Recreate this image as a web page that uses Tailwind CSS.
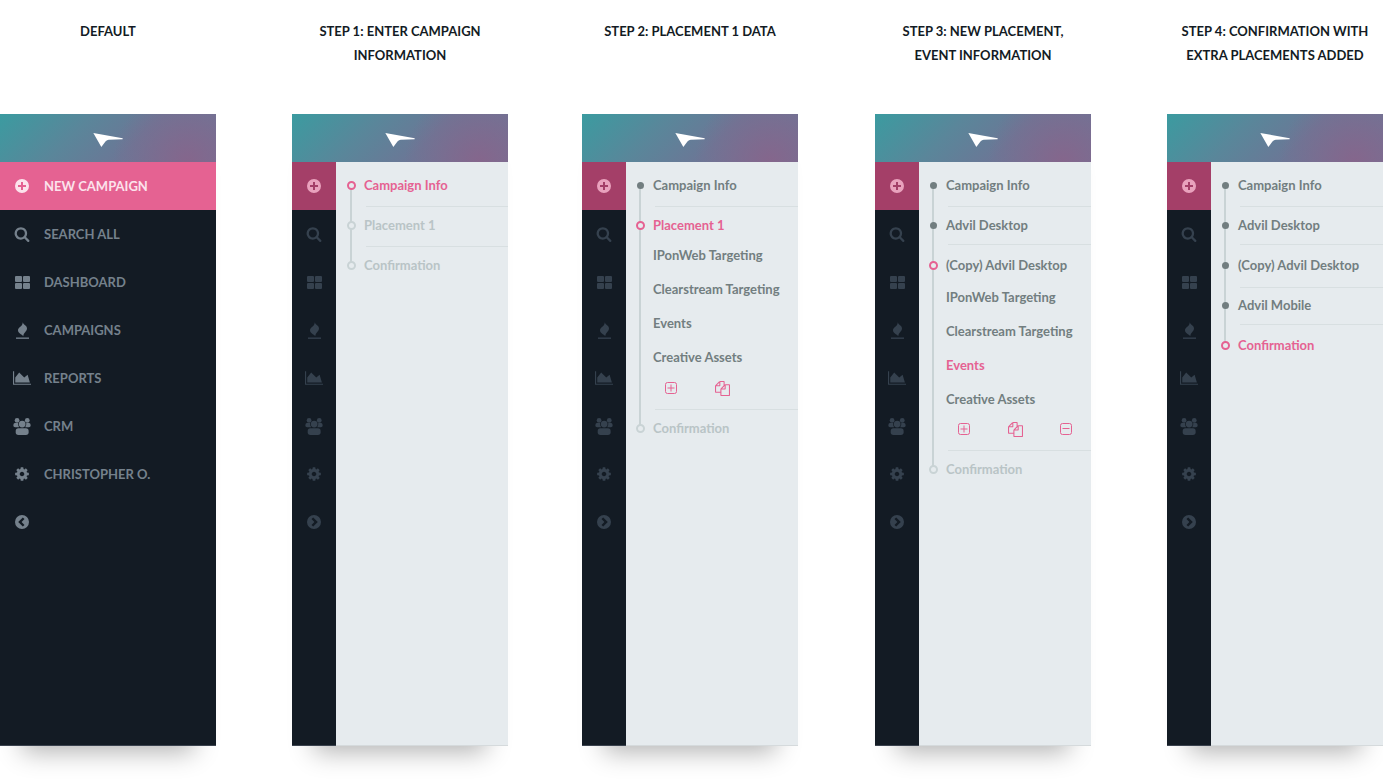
<!DOCTYPE html>
<html lang="en">
<head>
  <meta charset="UTF-8" />
  <meta name="viewport" content="width=device-width, initial-scale=1.0"/>
  <title>Campaign Sidebar</title>
  <script src="https://cdn.jsdelivr.net/npm/@tailwindcss/browser@4"></script>
</head>
<body class="min-h-screen bg-white font-['Lato',sans-serif] text-[13px] leading-5 font-bold">

  <!-- shared icons -->
  <svg class="hidden" aria-hidden="true">
    <symbol id="logo" viewBox="0 0 88 42"><path d="M0 0 L88 16 L88 19 L46 20 Q41 20 37 25 L24 42 Z"/></symbol>
    <symbol id="plus" viewBox="0 0 16 16"><path fill-rule="evenodd" d="M8 1a7 7 0 1 0 0 14a7 7 0 1 0 0-14zM7 4h2v3h3v2h-3v3h-2v-3h-3v-2h3z"/></symbol>
    <symbol id="search" viewBox="0 0 1792 1792"><path d="M1216 832q0-185-131.500-316.500t-316.500-131.500-316.500 131.500-131.500 316.500 131.500 316.500 316.500 131.500 316.500-131.500 131.500-316.500zm512 832q0 52-38 90t-90 38q-54 0-90-38l-343-342q-179 124-399 124-143 0-273.500-55.500t-225-150-150-225-55.500-273.500 55.500-273.500 150-225 225-150 273.500-55.500 273.500 55.500 225 150 150 225 55.500 273.500q0 220-124 399l343 343q37 37 37 90z"/></symbol>
    <symbol id="grid" viewBox="0 0 15 13"><rect width="7" height="6" rx="1"/><rect x="8" width="7" height="6" rx="1"/><rect y="7" width="7" height="6" rx="1"/><rect x="8" y="7" width="7" height="6" rx="1"/></symbol>
    <symbol id="flame" viewBox="0 0 39 50"><path d="M20 0 C23 9 33 9 33 19 C33 28 22 32 22 42 C17 36 5 34 6 23 C7 14 21 12 20 0Z"/><rect y="46" width="39" height="4"/></symbol>
    <symbol id="chart" viewBox="0 0 2048 1792"><path d="M2048 1536v128h-2048v-1536h128v1408h1920zm-384-1024l256 896h-1664v-576l448-576 576 576z"/></symbol>
    <symbol id="users" viewBox="0 0 51 50"><circle cx="11" cy="7" r="7"/><circle cx="41" cy="7" r="7"/><path d="M4 15 H14 Q13 22 17 27 H5 Q0 27 0 22 Q0 16 4 15Z"/><path d="M47 15 H38 Q39 22 35 27 H46 Q51 27 51 22 Q51 16 47 15Z"/><circle cx="26" cy="18" r="10"/><rect x="7" y="30" width="38" height="20" rx="8"/></symbol>
    <symbol id="cog" viewBox="0 0 1792 1792"><path d="M1152 896q0-106-75-181t-181-75-181 75-75 181 75 181 181 75 181-75 75-181zm512-109v222q0 12-8 23t-20 13l-185 28q-19 54-39 91 35 50 107 138 10 12 10 25t-9 23q-27 37-99 108t-94 71q-12 0-26-9l-138-108q-44 23-91 38-16 136-29 186-7 28-36 28h-222q-14 0-24.500-8.500t-11.500-21.500l-28-184q-49-16-90-37l-141 107q-10 9-25 9-14 0-25-11-126-114-165-168-7-10-7-23 0-12 8-23 15-21 51-66.500t54-70.500q-27-50-41-99l-183-27q-13-2-21-12.500t-8-23.500v-222q0-12 8-23t19-13l186-28q14-46 39-92-40-57-107-138-10-12-10-24 0-10 9-23 26-36 98.500-107.500t94.500-71.500q13 0 26 10l138 107q44-23 91-38 16-136 29-186 7-28 36-28h222q14 0 24.500 8.500t11.500 21.500l28 184q49 16 90 37l142-107q9-9 24-9 13 0 25 10 129 119 165 170 7 8 7 22 0 12-8 23-15 21-51 66.500t-54 70.500q26 50 41 98l183 28q13 2 21 12.500t8 23.500z"/></symbol>
    <symbol id="left" viewBox="0 0 16 16"><path fill-rule="evenodd" d="M8 1a7 7 0 1 0 0 14a7 7 0 1 0 0-14zM8.800 3.400l1.700 1.700L7.600 8l2.900 2.900l-1.700 1.700L4.200 8z"/></symbol>
    <symbol id="right" viewBox="0 0 16 16"><path fill-rule="evenodd" d="M8 1a7 7 0 1 0 0 14a7 7 0 1 0 0-14zM7.200 3.400l-1.700 1.700L8.400 8l-2.900 2.900l1.700 1.700L11.800 8z"/></symbol>
    <symbol id="add" viewBox="0 0 16 16"><g fill="none" stroke="currentColor"><rect x="2.500" y="2.500" width="11" height="11" rx="2"/><path d="M4.500 8h7M8 4.500v7"/></g></symbol>
    <symbol id="remove" viewBox="0 0 16 16"><g fill="none" stroke="currentColor"><rect x="2.500" y="2.500" width="11" height="11" rx="2"/><path d="M4.500 7.500h7"/></g></symbol>
    <symbol id="copy" viewBox="0 0 1792 1792"><path d="M1696 384q40 0 68 28t28 68v1216q0 40-28 68t-68 28h-960q-40 0-68-28t-28-68v-288h-544q-40 0-68-28t-28-68v-672q0-40 20-88t48-76l408-408q28-28 76-48t88-20h416q40 0 68 28t28 68v328q68-40 128-40h416zm-544 213l-299 299h299v-299zm-640-384l-299 299h299v-299zm196 647l316-316v-416h-384v416q0 40-28 68t-68 28h-416v640h512v-256q0-40 20-88t48-76zm956 804v-1152h-384v416q0 40-28 68t-68 28h-416v640h896z"/></symbol>
  </svg>

  <main class="grid grid-cols-[292fr_290fr_293fr_292fr_216fr]">

    <!-- default -->
    <section class="w-[216px]">
      <h2 class="h-[114px] pt-[19px] text-center leading-6 text-[#131b24]">DEFAULT</h2>
      <div class="flex min-h-[632px] flex-col border-b border-[#3a424e] bg-[#131b24] shadow-[0_28px_24px_-22px_rgba(0,0,0,0.3)]">
        <header class="flex h-12 items-center justify-center bg-[radial-gradient(circle_at_87%_100%,#85668c,transparent_75px),linear-gradient(135deg,#3b9ba0,#5a869a_35%,#6b7796_62%,#717396)] pt-1 text-white">
          <svg class="h-3.5 w-[30px] fill-current"><use href="#logo"/></svg>
        </header>
        <nav class="text-[#75818c]">
          <a href="#" class="flex h-12 items-center bg-[#e56292] text-[#fce3ec]"><span class="flex w-11 justify-center"><svg class="size-4 fill-current"><use href="#plus"/></svg></span>NEW CAMPAIGN</a>
          <a href="#" class="flex h-12 items-center"><span class="flex w-11 justify-center"><svg class="size-4 fill-current"><use href="#search"/></svg></span>SEARCH ALL</a>
          <a href="#" class="flex h-12 items-center"><span class="flex w-11 justify-center"><svg class="h-[13px] w-[15px] fill-current"><use href="#grid"/></svg></span>DASHBOARD</a>
          <a href="#" class="flex h-12 items-center"><span class="flex w-11 justify-center"><svg class="h-[17px] w-[13px] fill-current"><use href="#flame"/></svg></span>CAMPAIGNS</a>
          <a href="#" class="flex h-12 items-center"><span class="flex w-11 justify-center"><svg class="h-4 w-[18px] fill-current"><use href="#chart"/></svg></span>REPORTS</a>
          <a href="#" class="flex h-12 items-center"><span class="flex w-11 justify-center"><svg class="h-[17px] w-[18px] fill-current"><use href="#users"/></svg></span>CRM</a>
          <a href="#" class="flex h-12 items-center"><span class="flex w-11 justify-center"><svg class="size-4 fill-current"><use href="#cog"/></svg></span>CHRISTOPHER O.</a>
          <button type="button" aria-label="Collapse menu" class="flex h-12 w-11 items-center justify-center"><svg class="size-4 fill-current"><use href="#left"/></svg></button>
        </nav>
      </div>
    </section>

    <!-- step 1 -->
    <section class="w-[216px]">
      <h2 class="h-[114px] pt-[19px] text-center leading-6 text-[#131b24]">STEP 1: ENTER CAMPAIGN<br>INFORMATION</h2>
      <div class="flex min-h-[632px] flex-col shadow-[0_28px_24px_-22px_rgba(0,0,0,0.3)]">
        <header class="flex h-12 items-center justify-center bg-[radial-gradient(circle_at_87%_100%,#85668c,transparent_75px),linear-gradient(135deg,#3b9ba0,#5a869a_35%,#6b7796_62%,#717396)] pt-1 text-white">
          <svg class="h-3.5 w-[30px] fill-current"><use href="#logo"/></svg>
        </header>
        <div class="flex flex-1">
          <nav class="w-11 border-b border-[#3a424e] bg-[#131b24] text-[#35414e]">
            <a href="#" aria-label="New campaign" class="flex h-12 items-center justify-center bg-[#a43f68] text-[#e9a2bd]"><svg class="size-4 fill-current"><use href="#plus"/></svg></a>
            <a href="#" aria-label="Search all" class="flex h-12 items-center justify-center"><svg class="size-4 fill-current"><use href="#search"/></svg></a>
            <a href="#" aria-label="Dashboard" class="flex h-12 items-center justify-center"><svg class="h-[13px] w-[15px] fill-current"><use href="#grid"/></svg></a>
            <a href="#" aria-label="Campaigns" class="flex h-12 items-center justify-center"><svg class="h-[17px] w-[13px] fill-current"><use href="#flame"/></svg></a>
            <a href="#" aria-label="Reports" class="flex h-12 items-center justify-center"><svg class="h-4 w-[18px] fill-current"><use href="#chart"/></svg></a>
            <a href="#" aria-label="CRM" class="flex h-12 items-center justify-center"><svg class="h-[17px] w-[18px] fill-current"><use href="#users"/></svg></a>
            <a href="#" aria-label="Settings" class="flex h-12 items-center justify-center"><svg class="size-4 fill-current"><use href="#cog"/></svg></a>
            <button type="button" aria-label="Expand menu" class="flex h-12 w-11 items-center justify-center"><svg class="size-4 fill-current"><use href="#right"/></svg></button>
          </nav>
          <div class="flex-1 border-b border-[#d5dadc] bg-[#e6ebee]">
            <ol class="relative pt-[13px] pl-7 text-[#b9c4c6] before:absolute before:top-6 before:bottom-2.5 before:left-3.5 before:w-0.5 before:bg-[#c9d3d5]">
              <li class="relative">
                <span class="absolute top-1.5 -left-[17px] size-[9px] rounded-full border-2 border-[#e56292] bg-[#e6ebee]"></span>
                <a href="#" class="block text-[#e56292]">Campaign Info</a>
                <hr class="mt-[11px] ml-0.5 border-[#d8dfe1]">
              </li>
              <li class="relative mt-2">
                <span class="absolute top-1.5 -left-[17px] size-[9px] rounded-full border-2 border-[#c9d3d5] bg-[#e6ebee]"></span>
                <a href="#" class="block">Placement 1</a>
                <hr class="mt-[11px] ml-0.5 border-[#d8dfe1]">
              </li>
              <li class="relative mt-2">
                <span class="absolute top-1.5 -left-[17px] size-[9px] rounded-full border-2 border-[#c9d3d5] bg-[#e6ebee]"></span>
                <a href="#" class="block">Confirmation</a>
              </li>
            </ol>
          </div>
        </div>
      </div>
    </section>

    <!-- step 2 -->
    <section class="w-[216px]">
      <h2 class="h-[114px] pt-[19px] text-center leading-6 text-[#131b24]">STEP 2: PLACEMENT 1 DATA</h2>
      <div class="flex min-h-[632px] flex-col shadow-[0_28px_24px_-22px_rgba(0,0,0,0.3)]">
        <header class="flex h-12 items-center justify-center bg-[radial-gradient(circle_at_87%_100%,#85668c,transparent_75px),linear-gradient(135deg,#3b9ba0,#5a869a_35%,#6b7796_62%,#717396)] pt-1 text-white">
          <svg class="h-3.5 w-[30px] fill-current"><use href="#logo"/></svg>
        </header>
        <div class="flex flex-1">
          <nav class="w-11 border-b border-[#3a424e] bg-[#131b24] text-[#35414e]">
            <a href="#" aria-label="New campaign" class="flex h-12 items-center justify-center bg-[#a43f68] text-[#e9a2bd]"><svg class="size-4 fill-current"><use href="#plus"/></svg></a>
            <a href="#" aria-label="Search all" class="flex h-12 items-center justify-center"><svg class="size-4 fill-current"><use href="#search"/></svg></a>
            <a href="#" aria-label="Dashboard" class="flex h-12 items-center justify-center"><svg class="h-[13px] w-[15px] fill-current"><use href="#grid"/></svg></a>
            <a href="#" aria-label="Campaigns" class="flex h-12 items-center justify-center"><svg class="h-[17px] w-[13px] fill-current"><use href="#flame"/></svg></a>
            <a href="#" aria-label="Reports" class="flex h-12 items-center justify-center"><svg class="h-4 w-[18px] fill-current"><use href="#chart"/></svg></a>
            <a href="#" aria-label="CRM" class="flex h-12 items-center justify-center"><svg class="h-[17px] w-[18px] fill-current"><use href="#users"/></svg></a>
            <a href="#" aria-label="Settings" class="flex h-12 items-center justify-center"><svg class="size-4 fill-current"><use href="#cog"/></svg></a>
            <button type="button" aria-label="Expand menu" class="flex h-12 w-11 items-center justify-center"><svg class="size-4 fill-current"><use href="#right"/></svg></button>
          </nav>
          <div class="flex-1 border-b border-[#d5dadc] bg-[#e6ebee]">
            <ol class="relative pt-[13px] pl-[27px] text-[#727e80] before:absolute before:top-6 before:bottom-2.5 before:left-[13px] before:w-0.5 before:bg-[#c9d3d5]">
              <li class="relative">
                <span class="absolute top-[7px] -left-4 size-[7px] rounded-full bg-[#727e80]"></span>
                <a href="#" class="block">Campaign Info</a>
                <hr class="mt-[11px] ml-0.5 border-[#d8dfe1]">
              </li>
              <li class="relative mt-2">
                <span class="absolute top-1.5 -left-[17px] size-[9px] rounded-full border-2 border-[#e56292] bg-[#e6ebee]"></span>
                <a href="#" class="block text-[#e56292]">Placement 1</a>
                <ul class="mt-2.5 space-y-3.5">
                  <li><a href="#" class="block">IPonWeb Targeting</a></li>
                  <li><a href="#" class="block">Clearstream Targeting</a></li>
                  <li><a href="#" class="block">Events</a></li>
                  <li><a href="#" class="block">Creative Assets</a></li>
                </ul>
                <div class="mt-[13px] flex gap-[35px] pl-2.5 text-[#e56292]">
                  <button type="button" aria-label="Add placement" class="size-4"><svg class="size-4 fill-current"><use href="#add"/></svg></button>
                  <button type="button" aria-label="Copy placement" class="flex size-4 items-center justify-center"><svg class="size-[15px] fill-current"><use href="#copy"/></svg></button>
                </div>
                <hr class="mt-[13px] ml-0.5 border-[#d8dfe1]">
              </li>
              <li class="relative mt-2">
                <span class="absolute top-1.5 -left-[17px] size-[9px] rounded-full border-2 border-[#c9d3d5] bg-[#e6ebee]"></span>
                <a href="#" class="block text-[#b9c4c6]">Confirmation</a>
              </li>
            </ol>
          </div>
        </div>
      </div>
    </section>

    <!-- step 3 -->
    <section class="w-[216px]">
      <h2 class="h-[114px] pt-[19px] text-center leading-6 text-[#131b24]">STEP 3: NEW PLACEMENT,<br>EVENT INFORMATION</h2>
      <div class="flex min-h-[632px] flex-col shadow-[0_28px_24px_-22px_rgba(0,0,0,0.3)]">
        <header class="flex h-12 items-center justify-center bg-[radial-gradient(circle_at_87%_100%,#85668c,transparent_75px),linear-gradient(135deg,#3b9ba0,#5a869a_35%,#6b7796_62%,#717396)] pt-1 text-white">
          <svg class="h-3.5 w-[30px] fill-current"><use href="#logo"/></svg>
        </header>
        <div class="flex flex-1">
          <nav class="w-11 border-b border-[#3a424e] bg-[#131b24] text-[#35414e]">
            <a href="#" aria-label="New campaign" class="flex h-12 items-center justify-center bg-[#a43f68] text-[#e9a2bd]"><svg class="size-4 fill-current"><use href="#plus"/></svg></a>
            <a href="#" aria-label="Search all" class="flex h-12 items-center justify-center"><svg class="size-4 fill-current"><use href="#search"/></svg></a>
            <a href="#" aria-label="Dashboard" class="flex h-12 items-center justify-center"><svg class="h-[13px] w-[15px] fill-current"><use href="#grid"/></svg></a>
            <a href="#" aria-label="Campaigns" class="flex h-12 items-center justify-center"><svg class="h-[17px] w-[13px] fill-current"><use href="#flame"/></svg></a>
            <a href="#" aria-label="Reports" class="flex h-12 items-center justify-center"><svg class="h-4 w-[18px] fill-current"><use href="#chart"/></svg></a>
            <a href="#" aria-label="CRM" class="flex h-12 items-center justify-center"><svg class="h-[17px] w-[18px] fill-current"><use href="#users"/></svg></a>
            <a href="#" aria-label="Settings" class="flex h-12 items-center justify-center"><svg class="size-4 fill-current"><use href="#cog"/></svg></a>
            <button type="button" aria-label="Expand menu" class="flex h-12 w-11 items-center justify-center"><svg class="size-4 fill-current"><use href="#right"/></svg></button>
          </nav>
          <div class="flex-1 border-b border-[#d5dadc] bg-[#e6ebee]">
            <ol class="relative pt-[13px] pl-[27px] text-[#727e80] before:absolute before:top-6 before:bottom-2.5 before:left-[13px] before:w-0.5 before:bg-[#c9d3d5]">
              <li class="relative">
                <span class="absolute top-[7px] -left-4 size-[7px] rounded-full bg-[#727e80]"></span>
                <a href="#" class="block">Campaign Info</a>
                <hr class="mt-[11px] ml-0.5 border-[#d8dfe1]">
              </li>
              <li class="relative mt-2">
                <span class="absolute top-[7px] -left-4 size-[7px] rounded-full bg-[#727e80]"></span>
                <a href="#" class="block">Advil Desktop</a>
                <hr class="mt-[9px] ml-0.5 border-[#d8dfe1]">
              </li>
              <li class="relative mt-2.5">
                <span class="absolute top-1.5 -left-[17px] size-[9px] rounded-full border-2 border-[#e56292] bg-[#e6ebee]"></span>
                <a href="#" class="block">(Copy) Advil Desktop</a>
                <ul class="mt-3 space-y-3.5">
                  <li><a href="#" class="block">IPonWeb Targeting</a></li>
                  <li><a href="#" class="block">Clearstream Targeting</a></li>
                  <li><a href="#" class="block text-[#e56292]">Events</a></li>
                  <li><a href="#" class="block">Creative Assets</a></li>
                </ul>
                <div class="mt-3 flex gap-[35px] pl-2.5 text-[#e56292]">
                  <button type="button" aria-label="Add placement" class="size-4"><svg class="size-4 fill-current"><use href="#add"/></svg></button>
                  <button type="button" aria-label="Copy placement" class="flex size-4 items-center justify-center"><svg class="size-[15px] fill-current"><use href="#copy"/></svg></button>
                  <button type="button" aria-label="Remove placement" class="size-4"><svg class="size-4 fill-current"><use href="#remove"/></svg></button>
                </div>
                <hr class="mt-[13px] ml-0.5 border-[#d8dfe1]">
              </li>
              <li class="relative mt-2">
                <span class="absolute top-1.5 -left-[17px] size-[9px] rounded-full border-2 border-[#c9d3d5] bg-[#e6ebee]"></span>
                <a href="#" class="block text-[#b9c4c6]">Confirmation</a>
              </li>
            </ol>
          </div>
        </div>
      </div>
    </section>

    <!-- step 4 -->
    <section class="w-[216px]">
      <h2 class="h-[114px] pt-[19px] text-center leading-6 text-[#131b24]">STEP 4: CONFIRMATION WITH<br>EXTRA PLACEMENTS ADDED</h2>
      <div class="flex min-h-[632px] flex-col shadow-[0_28px_24px_-22px_rgba(0,0,0,0.3)]">
        <header class="flex h-12 items-center justify-center bg-[radial-gradient(circle_at_87%_100%,#85668c,transparent_75px),linear-gradient(135deg,#3b9ba0,#5a869a_35%,#6b7796_62%,#717396)] pt-1 text-white">
          <svg class="h-3.5 w-[30px] fill-current"><use href="#logo"/></svg>
        </header>
        <div class="flex flex-1">
          <nav class="w-11 border-b border-[#3a424e] bg-[#131b24] text-[#35414e]">
            <a href="#" aria-label="New campaign" class="flex h-12 items-center justify-center bg-[#a43f68] text-[#e9a2bd]"><svg class="size-4 fill-current"><use href="#plus"/></svg></a>
            <a href="#" aria-label="Search all" class="flex h-12 items-center justify-center"><svg class="size-4 fill-current"><use href="#search"/></svg></a>
            <a href="#" aria-label="Dashboard" class="flex h-12 items-center justify-center"><svg class="h-[13px] w-[15px] fill-current"><use href="#grid"/></svg></a>
            <a href="#" aria-label="Campaigns" class="flex h-12 items-center justify-center"><svg class="h-[17px] w-[13px] fill-current"><use href="#flame"/></svg></a>
            <a href="#" aria-label="Reports" class="flex h-12 items-center justify-center"><svg class="h-4 w-[18px] fill-current"><use href="#chart"/></svg></a>
            <a href="#" aria-label="CRM" class="flex h-12 items-center justify-center"><svg class="h-[17px] w-[18px] fill-current"><use href="#users"/></svg></a>
            <a href="#" aria-label="Settings" class="flex h-12 items-center justify-center"><svg class="size-4 fill-current"><use href="#cog"/></svg></a>
            <button type="button" aria-label="Expand menu" class="flex h-12 w-11 items-center justify-center"><svg class="size-4 fill-current"><use href="#right"/></svg></button>
          </nav>
          <div class="flex-1 border-b border-[#d5dadc] bg-[#e6ebee]">
            <ol class="relative pt-[13px] pl-[27px] text-[#727e80] before:absolute before:top-6 before:bottom-2.5 before:left-[13px] before:w-0.5 before:bg-[#c9d3d5]">
              <li class="relative">
                <span class="absolute top-[7px] -left-4 size-[7px] rounded-full bg-[#727e80]"></span>
                <a href="#" class="block">Campaign Info</a>
                <hr class="mt-[11px] ml-0.5 border-[#d8dfe1]">
              </li>
              <li class="relative mt-2">
                <span class="absolute top-[7px] -left-4 size-[7px] rounded-full bg-[#727e80]"></span>
                <a href="#" class="block">Advil Desktop</a>
                <hr class="mt-[9px] ml-0.5 border-[#d8dfe1]">
              </li>
              <li class="relative mt-2.5">
                <span class="absolute top-[7px] -left-4 size-[7px] rounded-full bg-[#727e80]"></span>
                <a href="#" class="block">(Copy) Advil Desktop</a>
                <hr class="mt-3 ml-0.5 border-[#d8dfe1]">
              </li>
              <li class="relative mt-[7px]">
                <span class="absolute top-[7px] -left-4 size-[7px] rounded-full bg-[#727e80]"></span>
                <a href="#" class="block">Advil Mobile</a>
                <hr class="mt-[9px] ml-0.5 border-[#d8dfe1]">
              </li>
              <li class="relative mt-2.5">
                <span class="absolute top-1.5 -left-[17px] size-[9px] rounded-full border-2 border-[#e56292] bg-[#e6ebee]"></span>
                <a href="#" class="block text-[#e56292]">Confirmation</a>
              </li>
            </ol>
          </div>
        </div>
      </div>
    </section>

  </main>
</body>
</html>
